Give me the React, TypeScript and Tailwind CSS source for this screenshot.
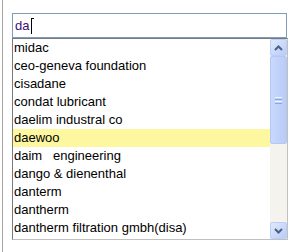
import { useState } from "react";

const items = [
  "midac",
  "ceo-geneva foundation",
  "cisadane",
  "condat lubricant",
  "daelim industral co",
  "daewoo",
  "daim   engineering",
  "dango & dienenthal",
  "danterm",
  "dantherm",
  "dantherm filtration gmbh(disa)",
];

function Chevron({ up }: { up?: boolean }) {
  return (
    <svg width="9" height="6" viewBox="0 0 9 6" className="block">
      <path
        d={up ? "M1 5 L4.5 1.5 L8 5" : "M1 1 L4.5 4.5 L8 1"}
        fill="none"
        stroke="#4d6185"
        strokeWidth="2"
      />
    </svg>
  );
}

function ScrollButton({ up }: { up?: boolean }) {
  return (
    <div className="h-[17px] w-[17px] flex items-center justify-center rounded-[2px] border border-[#bccdf8] bg-gradient-to-br from-[#e0e9fe] to-[#b8cbf7]">
      <Chevron up={up} />
    </div>
  );
}

export default function App() {
  const [value] = useState("da");
  const selected = 5;

  return (
    <div className="h-[252px] w-[298px] bg-white border-l border-[#a7a6a0] ml-[2px] pl-[9px] pt-[13px] font-['Liberation_Sans',sans-serif] text-[13px] text-black">
      {/* input */}
      <div className="h-[25px] w-[275px] border border-[#7f9db9] flex items-center pl-[2px]">
        <span className="text-[#3a0f6e] leading-none">{value}</span>
        <span className="ml-[2px] h-[16px] w-[1px] bg-black" />
        <span className="h-[1px] w-[2px] bg-black self-start mt-[4px]" />
      </div>

      {/* suggestion list */}
      <div className="w-[276px] h-[202px] border border-[#7a7a7a] border-r-[#c0c0c0] border-b-[#c0c0c0] flex">
        <div className="flex-1 flex flex-col">
          {items.map((item, i) => (
            <div
              key={item}
              className={`h-[18px] pl-[1px] flex items-center whitespace-pre ${
                i === selected ? "bg-[#fdf8a0]" : ""
              }`}
            >
              {item}
            </div>
          ))}
        </div>
        <div className="w-[17px] flex flex-col bg-[#f4f3ee]">
          <ScrollButton up />
          <div className="h-[88px] w-[17px] rounded-[2px] border border-[#b4c8f6] bg-gradient-to-r from-[#c9d8fc] to-[#b9cbf5] flex flex-col items-center justify-center gap-[1px]">
            <span className="h-[1px] w-[7px] bg-[#eef4fe]" />
            <span className="h-[1px] w-[7px] bg-[#8ca6e3]" />
            <span className="h-[1px] w-[7px] bg-[#eef4fe]" />
            <span className="h-[1px] w-[7px] bg-[#8ca6e3]" />
          </div>
          <div className="flex-1" />
          <ScrollButton />
        </div>
      </div>
    </div>
  );
}
